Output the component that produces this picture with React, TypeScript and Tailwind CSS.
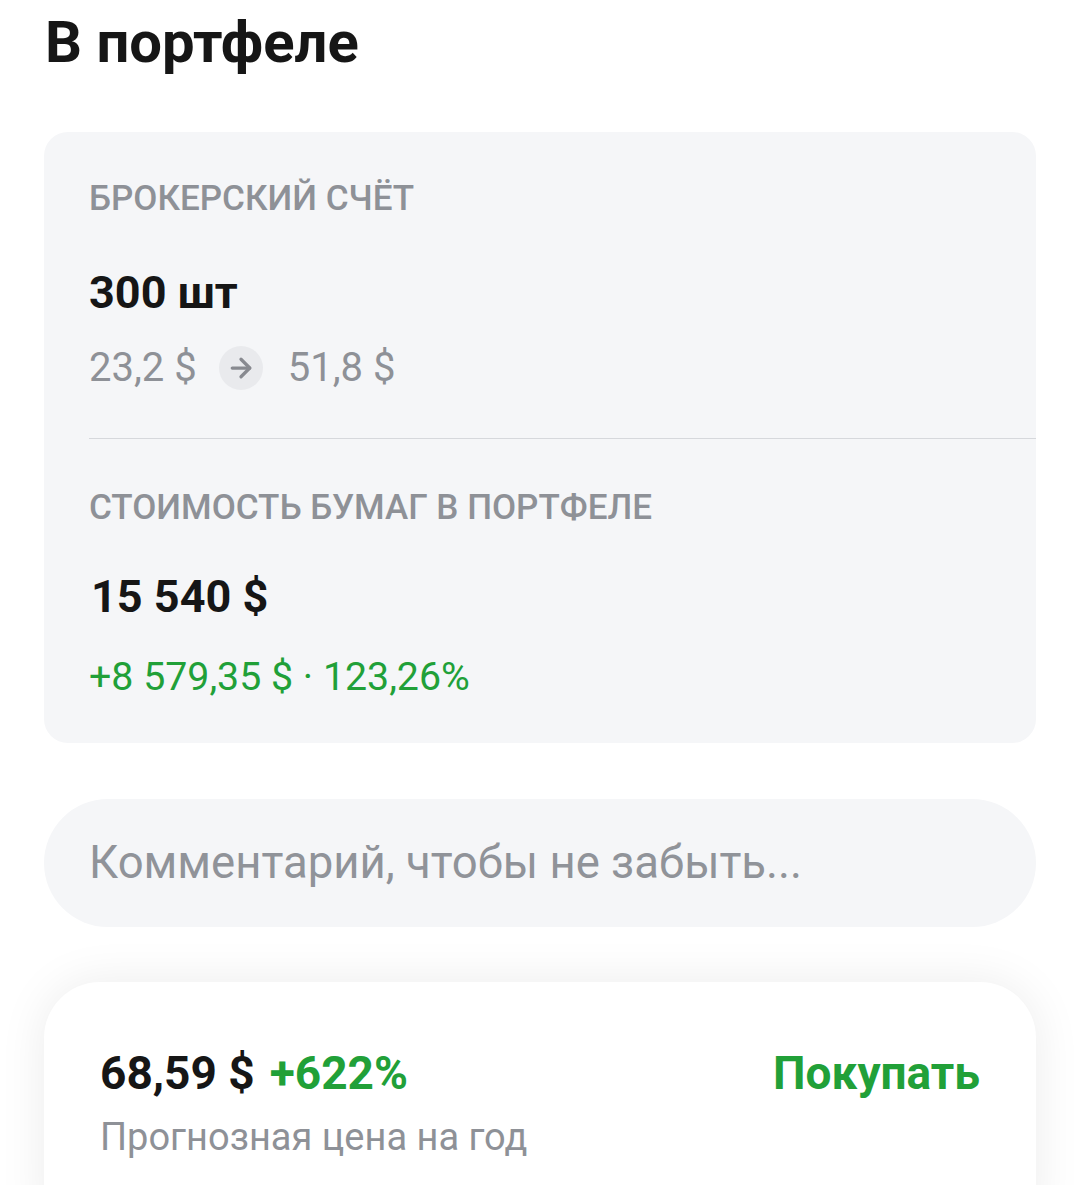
import { ArrowRight } from "lucide-react"

const font = { fontFamily: "Roboto, 'Noto Sans', sans-serif" }

const Label = ({ children }: { children: React.ReactNode }) => (
  <p className="text-[35px] leading-[40px] font-medium text-[#8e9197]">{children}</p>
)

const App = () => {
  return (
    <div className="h-[1185px] w-[1080px] overflow-hidden bg-white px-[44px] text-[#161616]" style={font}>
      <h1 className="pt-[10px] pl-px text-[58px] leading-[64px] font-bold">
        В портфеле
      </h1>

      <div className="mt-[58px] rounded-[24px] bg-[#f5f6f8] pl-[45px] pt-[47px] pb-[42px]">
        <Label>БРОКЕРСКИЙ СЧЁТ</Label>
        <p className="mt-[48px] text-[45px] leading-[52px] font-bold">300 шт</p>
        <div className="mt-[25px] flex items-center gap-[22px] text-[40px] leading-[48px] text-[#8e9197]">
          <span>23,2 $</span>
          <span className="flex h-[44px] w-[44px] items-center justify-center rounded-full bg-[#e9eaed]">
            <ArrowRight size={30} strokeWidth={2.6} color="#888a90" />
          </span>
          <span className="ml-[3px]">51,8 $</span>
        </div>

        <div className="mt-[46px] h-px bg-[#d6d8dc]" />

        <div className="mt-[49px]">
          <Label>СТОИМОСТЬ БУМАГ В ПОРТФЕЛЕ</Label>
        </div>
        <p className="mt-[43px] pl-[2px] text-[45px] leading-[52px] font-bold">15 540 $</p>
        <p className="mt-[30px] text-[39.3px] leading-[48px] text-[#21a038]">
          +8 579,35 $ · 123,26%
        </p>
      </div>

      <div className="mt-[56px] flex h-[128px] items-center rounded-full bg-[#f5f6f8] pl-[45px]">
        <span className="text-[45.5px] leading-[46px] text-[#909399]">
          Комментарий, чтобы не забыть...
        </span>
      </div>

      <div className="mt-[55px] rounded-[56px] bg-white pl-[56px] pr-[56px] pt-[64px] pb-[90px] shadow-[0_0_48px_rgba(0,0,0,0.08)]">
        <div className="flex items-center justify-between">
          <p className="text-[46px] leading-[54px] font-bold">
            68,59 $<span className="ml-[15px] text-[#21a038]">+622%</span>
          </p>
          <span className="text-[46px] leading-[54px] font-bold text-[#21a038]">Покупать</span>
        </div>
        <p className="mt-[15px] text-[38px] leading-[44px] text-[#8e9197]">
          Прогнозная цена на год
        </p>
      </div>
    </div>
  )
}

export default App
